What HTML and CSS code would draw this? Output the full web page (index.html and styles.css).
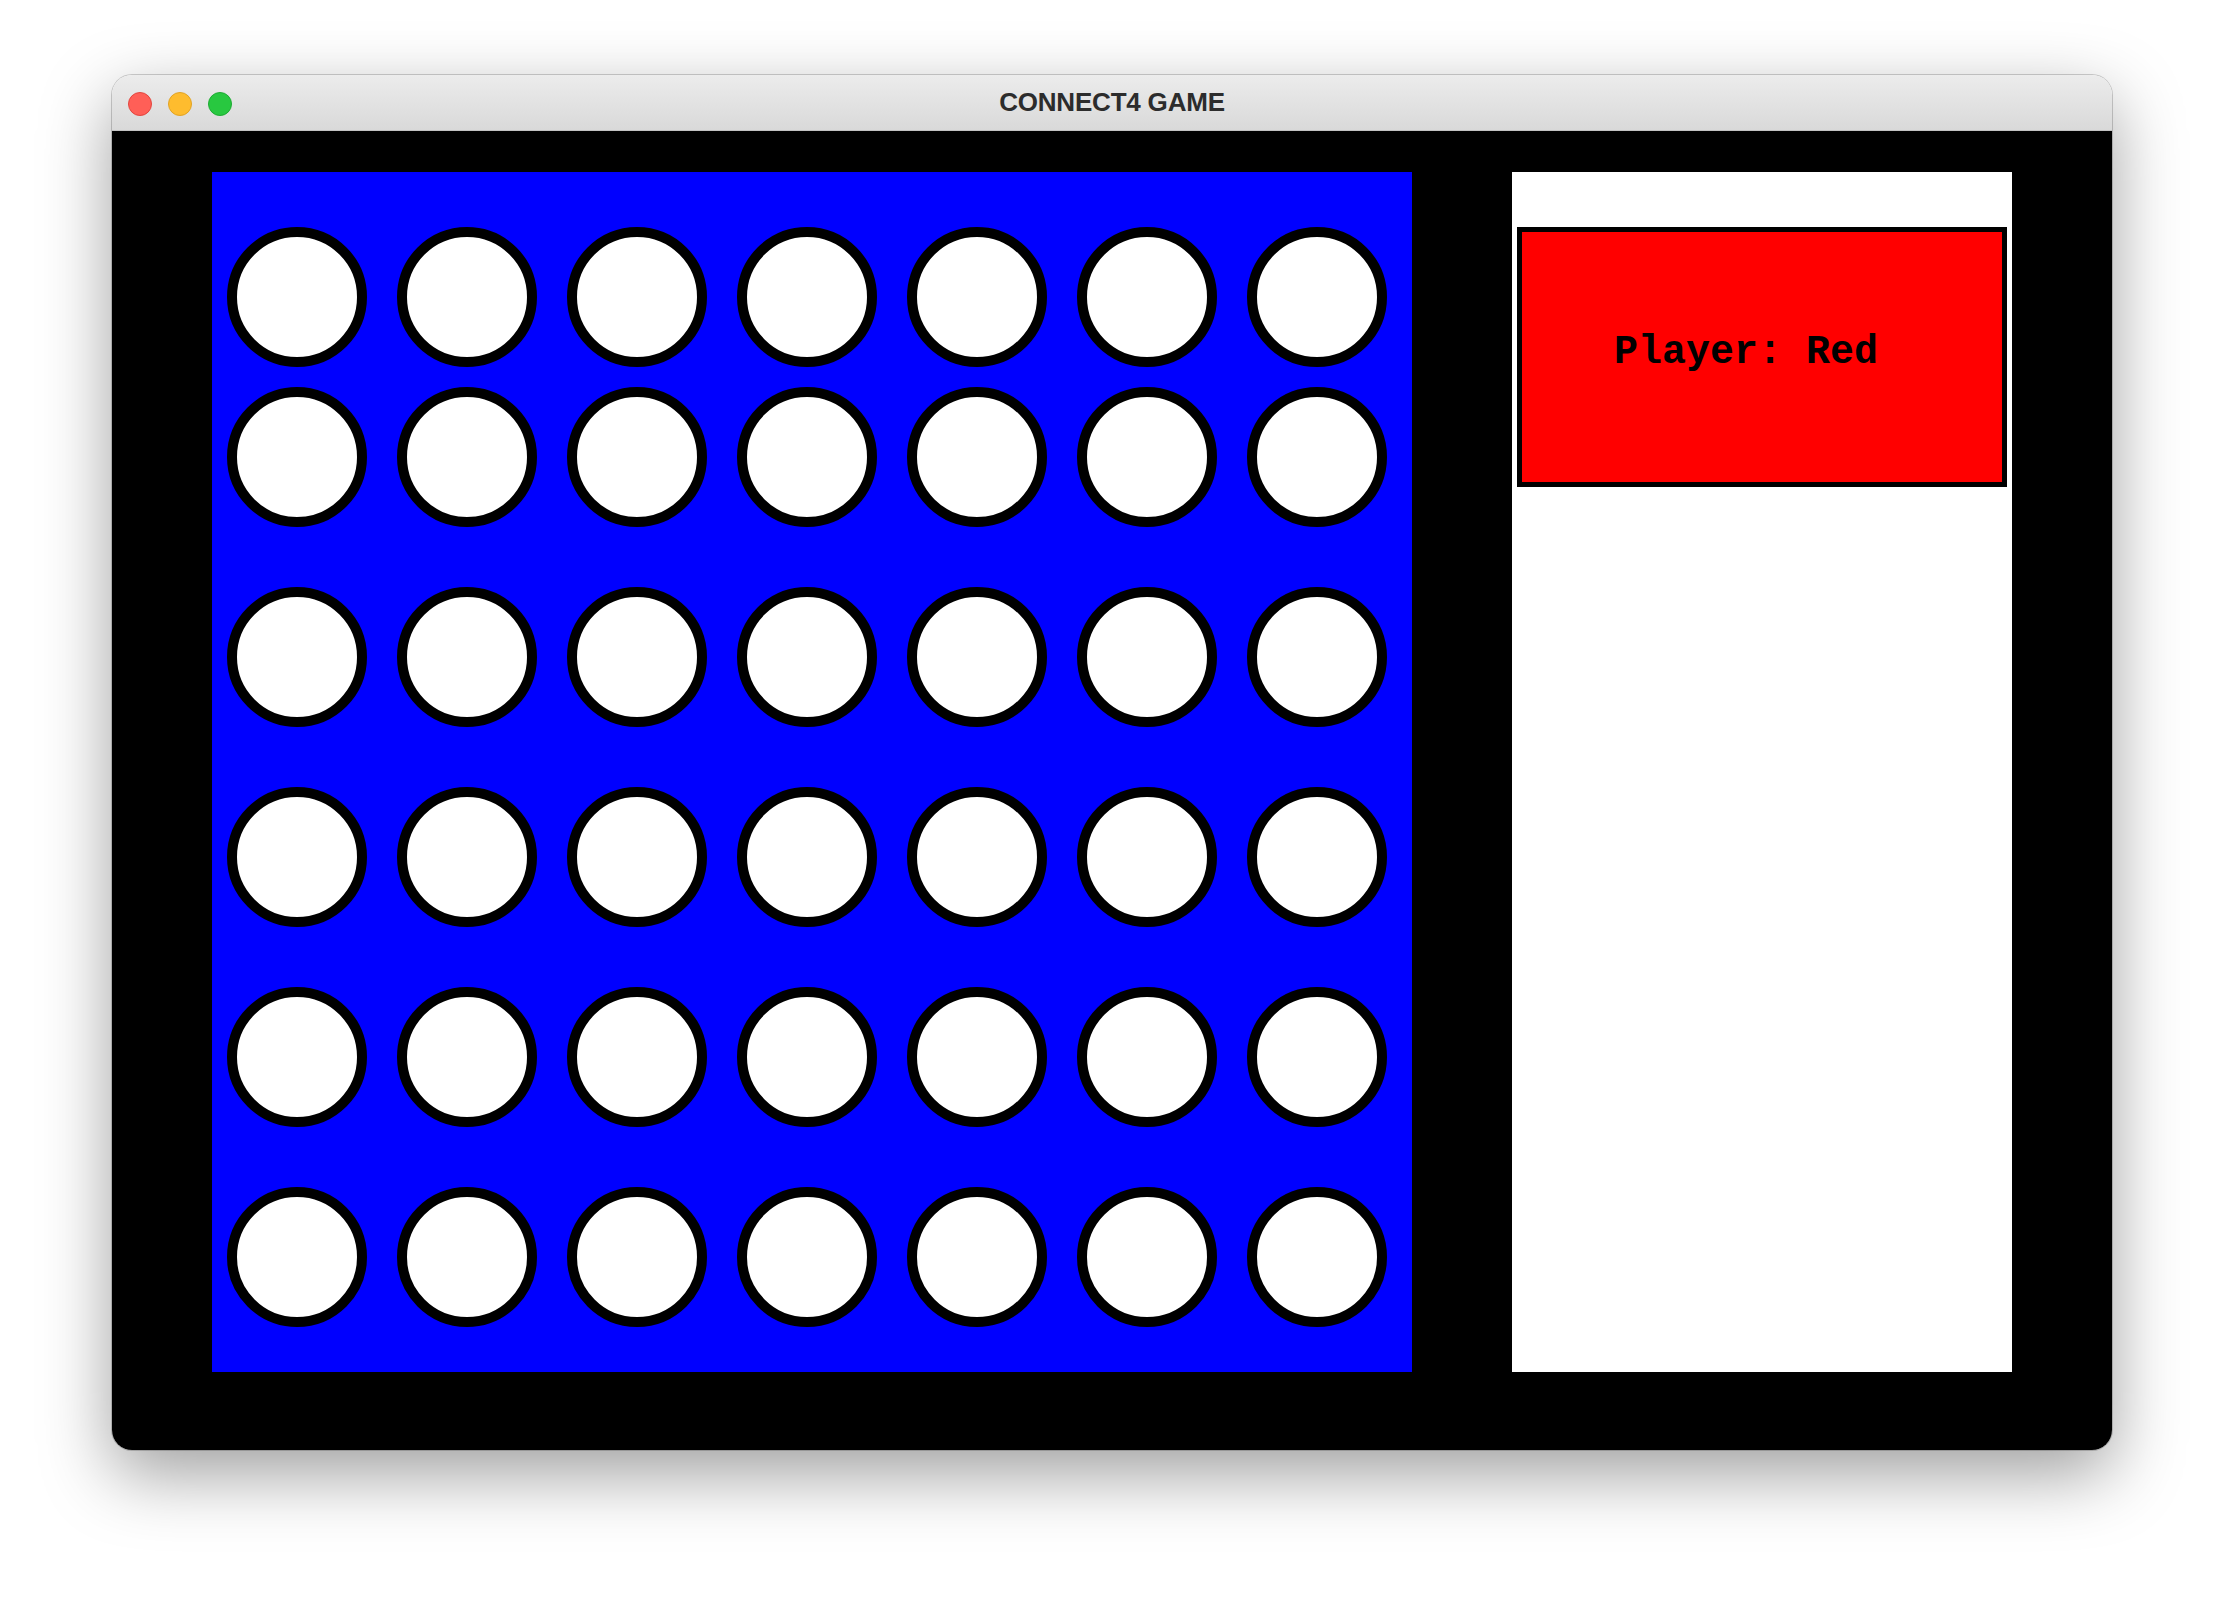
FILE: index.html
```html
<!DOCTYPE html>
<html>
<head>
<meta charset="utf-8">
<title>CONNECT4 GAME</title>
<link rel="stylesheet" href="styles.css">
</head>
<body>
<div class="window">
  <div class="titlebar">
    <div class="lights">
      <span class="light red"></span>
      <span class="light yellow"></span>
      <span class="light green"></span>
    </div>
    <div class="title">CONNECT4 GAME</div>
  </div>
  <div class="content">
    <div class="board">
      <div class="row"><span class="cell"></span><span class="cell"></span><span class="cell"></span><span class="cell"></span><span class="cell"></span><span class="cell"></span><span class="cell"></span></div>
      <div class="row"><span class="cell"></span><span class="cell"></span><span class="cell"></span><span class="cell"></span><span class="cell"></span><span class="cell"></span><span class="cell"></span></div>
      <div class="row"><span class="cell"></span><span class="cell"></span><span class="cell"></span><span class="cell"></span><span class="cell"></span><span class="cell"></span><span class="cell"></span></div>
      <div class="row"><span class="cell"></span><span class="cell"></span><span class="cell"></span><span class="cell"></span><span class="cell"></span><span class="cell"></span><span class="cell"></span></div>
      <div class="row"><span class="cell"></span><span class="cell"></span><span class="cell"></span><span class="cell"></span><span class="cell"></span><span class="cell"></span><span class="cell"></span></div>
      <div class="row"><span class="cell"></span><span class="cell"></span><span class="cell"></span><span class="cell"></span><span class="cell"></span><span class="cell"></span><span class="cell"></span></div>
    </div>
    <div class="panel">
      <div class="player">Player: Red</div>
    </div>
  </div>
</div>
</body>
</html>
```

FILE: styles.css
```css
html, body {
  margin: 0;
  padding: 0;
  background: #ffffff;
}

html {
  height: 100%;
}

body {
  min-height: 1598px;
  box-sizing: border-box;
  padding: 75px 0 0 112px;
}

.window {
  width: 2000px;
  border-radius: 20px;
  overflow: hidden;
  box-shadow: 0 0 0 1px rgba(0, 0, 0, 0.18), 0 24px 70px rgba(0, 0, 0, 0.38);
}

.titlebar {
  position: relative;
  height: 55px;
  border-bottom: 1px solid #c2c2c2;
  background: linear-gradient(#ececec, #d9d9d9);
  display: flex;
  align-items: center;
  justify-content: center;
}

.lights {
  position: absolute;
  left: 16px;
  top: 17px;
  display: flex;
  gap: 16px;
}

.light {
  width: 24px;
  height: 24px;
  border-radius: 50%;
  box-sizing: border-box;
}

.light.red {
  background: #ff5f57;
  border: 1px solid #e2463f;
}

.light.yellow {
  background: #febc2e;
  border: 1px solid #e1a325;
}

.light.green {
  background: #28c840;
  border: 1px solid #1eab33;
}

.title {
  font-family: "Liberation Sans", Arial, sans-serif;
  font-weight: bold;
  font-size: 26px;
  color: #2c2c2c;
  letter-spacing: -0.2px;
}

.content {
  height: 1319px;
  background: #000000;
  box-sizing: border-box;
  padding: 41px 0 0 100px;
  display: flex;
  gap: 100px;
  align-items: flex-start;
}

.board {
  width: 1200px;
  height: 1200px;
  background: #0000ff;
  box-sizing: border-box;
  padding: 55px 0 0 15px;
}

.row {
  display: flex;
  gap: 30px;
}

.row + .row {
  margin-top: 60px;
}

.row:nth-child(2) {
  margin-top: 20px;
}

.cell {
  width: 140px;
  height: 140px;
  box-sizing: border-box;
  border: 10px solid #000000;
  border-radius: 50%;
  background: #ffffff;
}

.panel {
  width: 500px;
  height: 1200px;
  background: #ffffff;
  box-sizing: border-box;
  padding: 55px 5px 0 5px;
}

.player {
  height: 260px;
  box-sizing: border-box;
  border: 5px solid #000000;
  background: #ff0000;
  padding: 101px 0 0 92px;
  font-family: "Liberation Mono", "Courier New", monospace;
  font-weight: bold;
  font-size: 40px;
  line-height: 40px;
  color: #000000;
}
```
